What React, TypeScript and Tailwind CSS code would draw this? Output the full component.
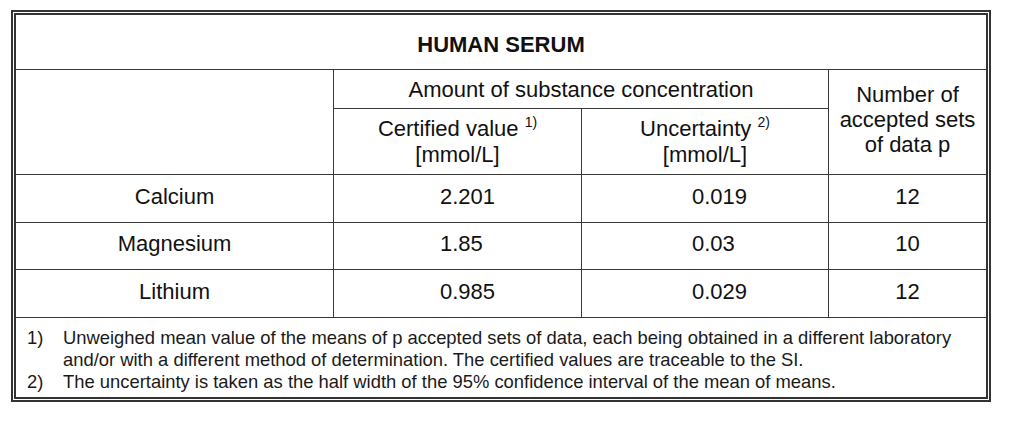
const rows = [
  { name: "Calcium", value: "2.201", unc: "0.019", p: "12" },
  { name: "Magnesium", value: "1.85", unc: "0.03", p: "10" },
  { name: "Lithium", value: "0.985", unc: "0.029", p: "12" },
];

export default function App() {
  return (
    <div className="h-[422px] w-[1024px] bg-white pl-[11px] pt-[10px] font-['Liberation_Sans',Arial,sans-serif] text-[#111]">
      <div className="w-[980px] border-[5px] border-double border-[#333]">
        <div className="grid grid-cols-[317px_247px_246px_157px] grid-rows-[54px_38px_65px_47px_46px_47px_79px] gap-px bg-[#3a3a3a] text-[22px] leading-[25px]">
          {/* title */}
          <div className="col-span-4 flex items-center justify-center bg-white pt-[5px] font-bold">
            HUMAN SERUM
          </div>

          {/* header rows */}
          <div className="row-span-2 bg-white" />
          <div className="col-span-2 flex items-center justify-center bg-white">
            Amount of substance concentration
          </div>
          <div className="row-span-2 flex flex-col items-center justify-center bg-white pb-[6px] text-center">
            <span>Number of</span>
            <span>accepted sets</span>
            <span>of data p</span>
          </div>
          <div className="flex flex-col items-center justify-center bg-white leading-[24px]">
            <span>
              Certified value{" "}
              <span className="relative -top-[9px] align-baseline text-[14px]">1)</span>
            </span>
            <span>[mmol/L]</span>
          </div>
          <div className="flex flex-col items-center justify-center bg-white leading-[24px]">
            <span>
              Uncertainty{" "}
              <span className="relative -top-[9px] align-baseline text-[14px]">2)</span>
            </span>
            <span>[mmol/L]</span>
          </div>

          {/* data */}
          {rows.map((r) => (
            <div key={r.name} className="contents">
              <div className="flex items-center justify-center bg-white pb-[5px]">{r.name}</div>
              <div className="flex items-center bg-white pb-[5px] pl-[106px]">{r.value}</div>
              <div className="flex items-center bg-white pb-[5px] pl-[110px]">{r.unc}</div>
              <div className="flex items-center justify-center bg-white pb-[5px]">{r.p}</div>
            </div>
          ))}

          {/* footnotes */}
          <div className="col-span-4 bg-white pl-[11px] pt-[9px] text-[18.4px] leading-[22px] text-[#1a1a1a]">
            <div className="flex">
              <span className="w-[36px] shrink-0">1)</span>
              <span>
                Unweighed mean value of the means of p accepted sets of data, each being obtained in a different laboratory
                <br />
                and/or with a different method of determination. The certified values are traceable to the SI.
              </span>
            </div>
            <div className="flex">
              <span className="w-[36px] shrink-0">2)</span>
              <span>The uncertainty is taken as the half width of the 95% confidence interval of the mean of means.</span>
            </div>
          </div>
        </div>
      </div>
    </div>
  );
}
